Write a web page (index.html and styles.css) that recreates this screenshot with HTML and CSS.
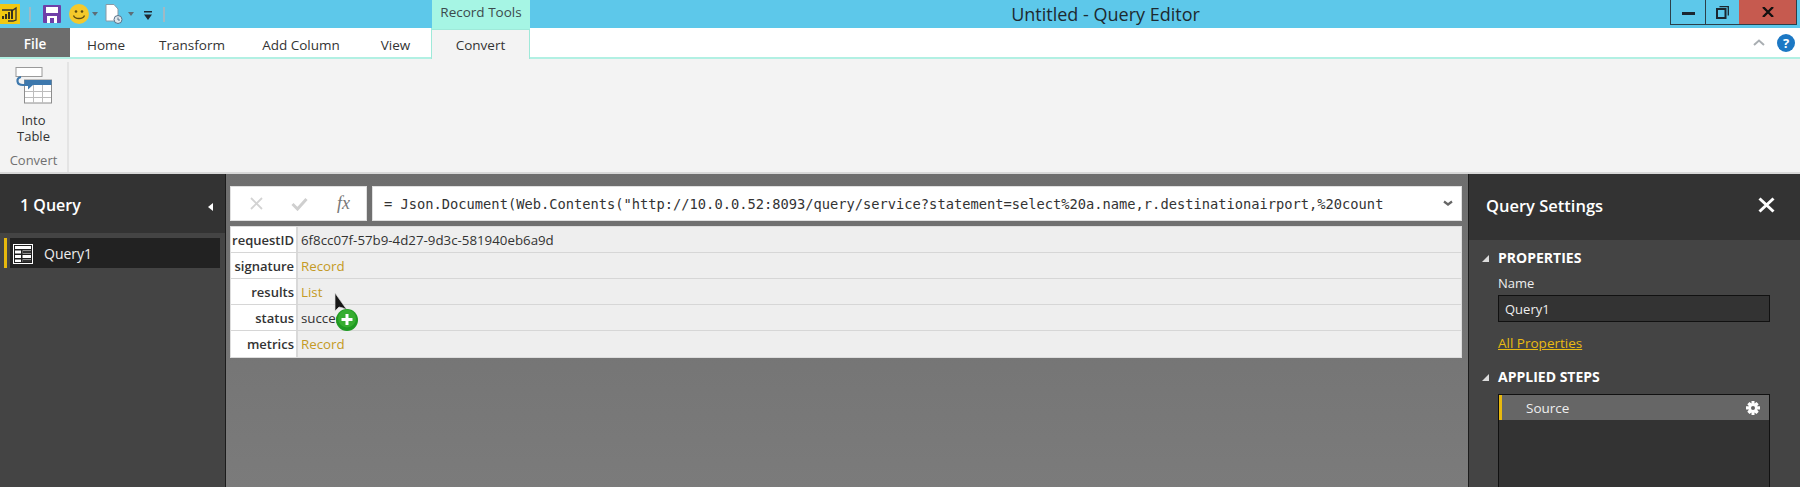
FILE: index.html
```html
<!DOCTYPE html>
<html lang="en">
<head>
<meta charset="utf-8">
<title>Untitled - Query Editor</title>
<link rel="stylesheet" href="styles.css">
</head>
<body>
<header class="titlebar">
  <div class="qat">
    <svg class="ico-app" width="20" height="20" viewBox="0 0 20 20"><rect width="20" height="20" fill="#f2c811"/><path d="M2 6h11l3-2v12l-3 1H8" fill="none" stroke="#333" stroke-width="1.3"/><path d="M3 15v-3M6 15v-5M9 15V8M12 15V6" stroke="#222" stroke-width="1.8"/></svg>
    <span class="qsep"></span>
    <svg class="ico-save" width="18" height="18" viewBox="0 0 18 18"><rect width="18" height="18" rx="1" fill="#6f3fa8"/><rect x="3" y="2" width="12" height="6" fill="#fff"/><rect x="4" y="11" width="10" height="7" fill="#fff"/><rect x="7" y="13" width="4" height="5" fill="#6f3fa8"/></svg>
    <svg class="ico-smile" width="20" height="20" viewBox="0 0 20 20"><circle cx="10" cy="10" r="10" fill="#f4c92b"/><circle cx="7" cy="7.5" r="1.3" fill="#5a4a10"/><circle cx="13" cy="7.5" r="1.3" fill="#5a4a10"/><path d="M4.5 11.5c1.5 4 9.500 4 11 0" fill="none" stroke="#5a4a10" stroke-width="1.3"/></svg>
    <i class="caret"></i>
    <svg class="ico-doc" width="18" height="20" viewBox="0 0 18 20"><path d="M1 .5h8l4 4.500v12H1z" fill="#fff" stroke="#8a9aa5"/><circle cx="13" cy="15.500" r="4" fill="#dfe7ec" stroke="#56728a"/><path d="M13 13.500v2.500h2" fill="none" stroke="#56728a"/></svg>
    <i class="caret caret-doc"></i>
    <svg class="ico-more" width="8" height="9" viewBox="0 0 8 9"><path d="M0 0h8v1.500H0zM0 3.500h8L4 9z" fill="#1f2a33"/></svg>
    <span class="qsep qsep-end"></span>
  </div>
  <div class="contextual">Record Tools</div>
  <div class="wintitle">Untitled - Query Editor</div>
  <div class="winbtns">
    <span class="wb"><i class="wb-min"></i></span>
    <span class="wb wb-narrow"><svg width="13" height="13" viewBox="0 0 13 13"><path d="M3.500.7h8.800v8.800" fill="none" stroke="#1b2730" stroke-width="1.300"/><rect x="1" y="3" width="8.500" height="9" fill="none" stroke="#1b2730" stroke-width="2"/></svg></span>
    <span class="wb wb-close"><svg width="12" height="10" viewBox="0 0 12 10"><path d="M1 0l10 10M11 0L1 10" stroke="#111" stroke-width="2.300"/></svg></span>
  </div>
</header>
<nav class="tabs">
  <span class="tab tab-file">File</span>
  <span class="tab tab-home">Home</span>
  <span class="tab tab-transform">Transform</span>
  <span class="tab tab-add">Add Column</span>
  <span class="tab tab-view">View</span>
  <span class="tab tab-convert">Convert</span>
  <span class="tabs-fill"></span>
  <svg class="ico-up" width="12" height="7" viewBox="0 0 12 7"><path d="M1 6l5-4.500L11 6" fill="none" stroke="#a9aeb2" stroke-width="2"/></svg>
  <span class="help">?</span>
</nav>
<section class="ribbon">
  <div class="rgroup">
    <div class="rbtn">
      <svg width="38" height="37" viewBox="0 0 38 37"><rect x="1" y=".5" width="26" height="9" fill="#fff" stroke="#9a9a9a"/><rect x="9.500" y="13" width="27" height="23" fill="#fff" stroke="#8d8d8d"/><rect x="9.500" y="13" width="27" height="5" fill="#3d78ad"/><path d="M10 24.500h26M10 30.500h26M18.500 18v18M27.500 18v18" stroke="#bdbdbd"/><path d="M6 10c-5 1-5 8 2 8h7" fill="none" stroke="#3d78ad" stroke-width="2.200"/><path d="M13 13.500l5 4.500-5 4.500z" fill="#3d78ad"/></svg>
      <span class="rlabel">Into<br>Table</span>
    </div>
    <div class="rgroup-name">Convert</div>
  </div>
</section>
<main class="workspace">
  <aside class="queries">
    <div class="q-head"><span class="q-title">1 Query</span><i class="q-collapse"></i></div>
    <div class="q-list">
      <div class="q-item">
        <svg width="20" height="20" viewBox="0 0 20 20"><rect x=".5" y=".5" width="19" height="19" fill="#1f1f1f" stroke="#fff"/><path d="M2 2h16v3H2zM2 6.500h6v3H2zM2 11h6v3H2zM2 15.500h6V18H2zM9.500 6.500H18v3H9.500zM9.500 11H18v3H9.500zM9.500 15.500H18V18H9.500z" fill="#fff"/><path d="M9.500 7h8.500v2H9.500zM9.500 16h8.500v2H9.500z" fill="#333"/></svg>
        <span>Query1</span>
      </div>
    </div>
  </aside>
  <section class="center">
    <div class="formula">
      <div class="f-btns">
        <svg width="13" height="13" viewBox="0 0 13 13"><path d="M1 1l11 11M12 1L1 12" stroke="#d3d3d3" stroke-width="1.800"/></svg>
        <svg class="f-check" width="17" height="14" viewBox="0 0 17 14"><path d="M1.500 7l5 5L15.500 2" fill="none" stroke="#cfcfcf" stroke-width="3"/></svg>
        <span class="fx">fx</span>
      </div>
      <div class="f-input">
        <span class="f-text">= Json.Document(Web.Contents("http://10.0.0.52:8093/query/service?statement=select%20a.name,r.destinationairport,%20count</span>
        <svg width="10" height="7" viewBox="0 0 10 7"><path d="M1 1.500l4 3 4-3" fill="none" stroke="#666" stroke-width="2.200"/></svg>
      </div>
    </div>
    <div class="record">
      <div class="row"><span class="key">requestID</span><span class="val">6f8cc07f-57b9-4d27-9d3c-581940eb6a9d</span></div>
      <div class="row"><span class="key">signature</span><span class="val link">Record</span></div>
      <div class="row"><span class="key">results</span><span class="val link">List</span></div>
      <div class="row"><span class="key">status</span><span class="val">success</span></div>
      <div class="row"><span class="key">metrics</span><span class="val link">Record</span></div>
      <svg class="cursor" width="36" height="38" viewBox="0 0 36 38">
        <path d="M1 0v18l4-4 4 1 4 2z" fill="#161616" stroke="#ddd" stroke-width=".7"/>
        <circle cx="13" cy="27" r="11" fill="#1f9a22"/><circle cx="13" cy="25.500" r="9" fill="#35ad2f"/>
        <path d="M7.500 26.500h11M13 21v11" stroke="#fff" stroke-width="3"/>
      </svg>
    </div>
  </section>
  <aside class="settings">
    <div class="s-head"><span class="s-title">Query Settings</span>
      <svg width="17" height="16" viewBox="0 0 17 16"><path d="M1.500 1.500l14 13M15.500 1.500l-14 13" stroke="#fff" stroke-width="3"/></svg>
    </div>
    <div class="s-body">
      <h2 class="s-section"><i class="tri"></i>PROPERTIES</h2>
      <div class="s-block">
        <label class="s-label">Name</label>
        <div class="s-input">Query1</div>
        <a class="s-link">All Properties</a>
      </div>
      <h2 class="s-section s-section-steps"><i class="tri"></i>APPLIED STEPS</h2>
      <div class="s-steps">
        <div class="step"><span>Source</span>
          <svg width="14" height="14" viewBox="0 0 14 14"><path d="M5.500 0h3v2.500l2-1.500 2.200 2.200L11 5.200h3v3.400h-3l1.700 2.100-2.200 2.200-2-1.500V14h-3v-2.600l-2 1.500-2.200-2.200L3 8.600H0V5.200h3L1.300 3.200 3.500 1l2 1.500z" fill="#fff"/><circle cx="7" cy="7" r="2" fill="#666"/></svg>
        </div>
      </div>
    </div>
  </aside>
</main>
</body>
</html>
```

FILE: styles.css
```css
* { box-sizing: border-box; }
html, body { margin: 0; height: 487px; overflow: hidden; }
body { font-family: "Open Sans", "Noto Sans", sans-serif; font-size: 13px; color: #333; background: #444; display: flex; flex-direction: column; }

.titlebar { height: 28px; background: #5dc8ea; display: flex; position: relative; flex: none; }
.qat { display: flex; align-items: center; width: 432px; height: 28px; flex: none; }
.qsep { width: 2px; height: 15px; background: #a0b9c4; margin-left: 9px; flex: none; }
.qsep-end { margin-left: 11px; }
.ico-save { margin-left: 12px; }
.ico-smile { margin-left: 8px; }
.caret { width: 0; height: 0; border: 3px solid transparent; border-top: 4px solid #5d6d77; border-bottom: 0; margin-left: 3px; }
.ico-doc { margin-left: 7px; }
.caret-doc { margin-left: 5px; }
.ico-more { margin-left: 10px; margin-top: 2px; }
.contextual { width: 98px; height: 29px; background: #a6f5e4; color: #3c4a4c; font-size: 13.500px; text-align: center; line-height: 25px; flex: none; z-index: 1; }
.wintitle { flex: 1; text-align: center; font-size: 18px; line-height: 28px; color: #1d2a30; padding-right: 119px; }
.winbtns { position: absolute; right: 3px; top: 0; display: flex; height: 25px; border: 1px solid #2c3f49; border-top: 0; }
.wb { width: 35px; display: flex; align-items: center; justify-content: center; border-right: 1px solid #2c3f49; }
.wb-narrow { width: 33px; border-right: 0; }
.wb-close { width: 57px; background: #c65a4f; border-right: 0; }
.wb-min { width: 13px; height: 3px; background: #1b2730; margin-top: 3px; }

.tabs { height: 31px; background: #fff; border-bottom: 2px solid #b2f0e3; display: flex; flex: none; align-items: stretch; }
.tab { font-size: 13.500px; display: flex; align-items: center; justify-content: center; color: #333; padding-top: 4px; flex: none; }
.tab-file { width: 70px; background: #6d6d6d; color: #fff; font-weight: 600; padding-top: 2px; }
.tab-home { width: 72px; }
.tab-transform { width: 100px; }
.tab-add { width: 118px; }
.tab-view { width: 71px; }
.tab-convert { width: 99px; margin-bottom: -2px; background: #f3f3f3; border: 1px solid #9fe9d9; border-bottom: 0; border-top-width: 2px; padding-top: 1px; position: relative; }
.tabs-fill { flex: 1; }
.ico-up { align-self: center; margin-right: 12px; }
.help { align-self: center; width: 18px; height: 18px; border-radius: 50%; background: #1c78c4; color: #fff; font-weight: 700; font-size: 13px; line-height: 18px; text-align: center; margin-right: 5px; }

.ribbon { height: 115px; background: #f3f3f3; border-bottom: 2px solid #d8d8d8; flex: none; display: flex; }
.rgroup { width: 69px; height: 110px; margin-top: 3px; border-right: 2px solid #e4e4e4; display: flex; flex-direction: column; align-items: center; }
.rbtn { display: flex; flex-direction: column; align-items: center; padding-top: 5px; height: 90px; }
.rlabel { text-align: center; font-size: 13px; line-height: 16px; margin-top: 8px; color: #333; }
.rgroup-name { font-size: 13px; line-height: 16px; color: #707070; }

.workspace { flex: 1; display: flex; min-height: 0; background: #222; }
.queries { width: 225px; background: #444; flex: none; }
.q-head { height: 59px; background: #333; display: flex; align-items: center; justify-content: space-between; padding: 2px 12px 0 20px; }
.q-title { color: #fff; font-size: 16px; font-weight: 600; }
.q-collapse { width: 0; height: 0; border: 4px solid transparent; border-right: 5px solid #fff; border-left: 0; margin-top: 5px; }
.q-list { padding: 5px 4px; }
.q-item { height: 30px; border-left: 3px solid #e8b90e; display: flex; align-items: center; color: #eee; font-size: 14px; width: 216px; background: #222; box-shadow: inset 3px 0 0 #444; padding-top: 1px; }
.q-item svg { margin-left: 6px; margin-right: 11px; }

.center { flex: 1; min-width: 0; background: linear-gradient(#6e6e6e, #7b7b7b); border-left: 1px solid #1c1c1c; padding: 12px 6px 0 4px; }
.formula { display: flex; gap: 5px; height: 35px; }
.f-btns { width: 137px; background: #fff; border: 1px solid #e0e0e0; display: flex; align-items: center; justify-content: space-between; padding: 0 16px 0 19px; flex: none; }
.f-check { margin-left: -2px; }
.fx { font-family: "Liberation Serif", serif; font-style: italic; color: #777; font-size: 18px; }
.f-input { flex: 1; min-width: 0; background: #fff; border: 1px solid #e0e0e0; display: flex; align-items: center; justify-content: space-between; padding: 0 8px 0 11px; }
.f-text { font-family: "DejaVu Sans Mono", monospace; font-size: 13.720px; color: #333; white-space: nowrap; }
.record { margin-top: 5px; background: #eee; border: 1px solid #ddd; position: relative; }
.row { display: flex; height: 26px; border-bottom: 1px solid #d6d6d6; align-items: stretch; }
.row:last-of-type { border-bottom: 0; }
.key { width: 67px; background: #fff; border-right: 2px solid #d9d9d9; text-align: right; font-weight: 600; font-size: 13px; line-height: 27px; padding-right: 2px; color: #333; flex: none; }
.val { padding-left: 3px; font-size: 13.300px; line-height: 27px; color: #333; }
.link { color: #c49a25; }
.cursor { position: absolute; left: 103px; top: 66px; }

.settings { width: 332px; flex: none; background: #444; border-left: 1px solid #1c1c1c; }
.s-head { height: 66px; background: #333; display: flex; align-items: center; justify-content: space-between; padding: 0 25px 4px 17px; }
.s-title { color: #fff; font-size: 16.500px; font-weight: 600; }
.s-body { padding: 0 0 0 17px; }
.s-section { margin: 0; font-size: 14px; font-weight: 700; color: #fff; line-height: 18px; padding-top: 9px; display: flex; align-items: center; }
.s-section-steps { padding-top: 16px; }
.tri { width: 0; height: 0; border-style: solid; border-width: 0 0 7px 7px; border-color: transparent transparent #ddd transparent; margin-left: -4px; margin-right: 9px; }
.s-block { padding-left: 12px; }
.s-label { display: block; color: #eee; font-size: 13px; line-height: 18px; margin-top: 7px; }
.s-input { width: 272px; height: 27px; margin-top: 3px; background: #333; border: 1px solid #111; color: #eee; font-size: 13px; line-height: 27px; padding-left: 6px; }
.s-link { display: block; color: #e9bb12; text-decoration: underline; font-size: 13.500px; line-height: 18px; margin-top: 12px; }
.s-steps { margin: 8px 0 0 12px; width: 272px; height: 93px; background: #333; border: 1px solid #111; border-bottom: 0; }
.step { height: 25px; background: #666; border-left: 3px solid #e8b90e; display: flex; align-items: center; justify-content: space-between; padding: 0 9px 0 24px; color: #eee; font-size: 13.500px; }
```
